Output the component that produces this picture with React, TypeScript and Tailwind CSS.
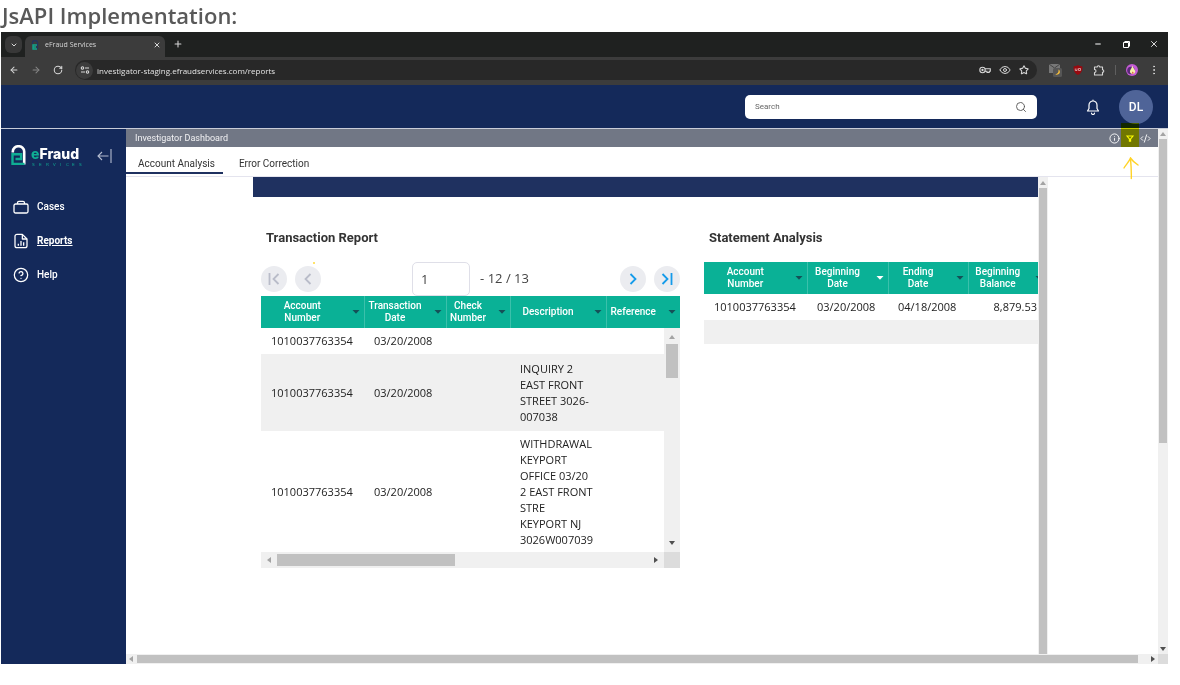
import type { ReactNode } from "react";
import clsx from "clsx";
import {
  ArrowLeft,
  ArrowRight,
  ChevronDown,
  CircleHelp,
  CodeXml,
  EllipsisVertical,
  Eye,
  Info,
  Minus,
  Plus,
  RotateCw,
  Search,
  Star,
  X,
} from "lucide-react";

interface Column {
  label: string;
  width: string;
  active?: boolean;
  align?: "right";
}

interface Row {
  height: string;
  cells: string[];
}

const transactionColumns: Column[] = [
  { label: "Account\nNumber", width: "w-[103px]" },
  { label: "Transaction\nDate", width: "w-[82px]" },
  { label: "Check\nNumber", width: "w-[64px]" },
  { label: "Description", width: "w-[96px]" },
  { label: "Reference", width: "" },
];

const transactionRows: Row[] = [
  { height: "h-[26px]", cells: ["1010037763354", "03/20/2008", "", "", ""] },
  {
    height: "h-[77px]",
    cells: ["1010037763354", "03/20/2008", "", "INQUIRY 2\nEAST FRONT\nSTREET 3026-\n007038", ""],
  },
  {
    height: "h-[121px]",
    cells: [
      "1010037763354",
      "03/20/2008",
      "",
      "WITHDRAWAL\nKEYPORT\nOFFICE 03/20\n2 EAST FRONT\nSTRE\nKEYPORT NJ\n3026W007039",
      "",
    ],
  },
];

const statementColumns: Column[] = [
  { label: "Account\nNumber", width: "w-[103px]" },
  { label: "Beginning\nDate", width: "w-[81px]", active: true },
  { label: "Ending\nDate", width: "w-[80px]" },
  { label: "Beginning\nBalance", width: "", align: "right" },
];

const statementRows: Row[] = [
  { height: "h-[26px]", cells: ["1010037763354", "03/20/2008", "04/18/2008", "8,879.53"] },
  { height: "h-6", cells: ["", "", "", ""] },
];

const arrowPoints = {
  up: "0,5 6,5 3,1",
  down: "0,1 6,1 3,5",
  left: "5,0 5,6 1,3",
  right: "1,0 1,6 5,3",
};

function Triangle({ dir, className }: { dir: keyof typeof arrowPoints; className?: string }) {
  return (
    <svg viewBox="0 0 6 6" className={clsx("size-1.5 shrink-0", className)} fill="currentColor" aria-hidden="true">
      <polygon points={arrowPoints[dir]} />
    </svg>
  );
}

function DataTable({ columns, rows, className }: { columns: Column[]; rows: Row[]; className: string }) {
  return (
    <table className={clsx("table-fixed border-collapse", className)}>
      <thead>
        <tr className="h-8 bg-[#0ab196]">
          {columns.map((col) => (
            <th key={col.label} className={clsx("border-l border-white/20 p-0 first:border-l-0", col.width)}>
              <div className="flex items-center">
                <span className="min-w-0 flex-1 text-center text-[10px] leading-3 font-medium whitespace-pre text-white">
                  {col.label}
                </span>
                <svg
                  viewBox="0 0 8 8"
                  className={clsx("mr-1 ml-2 size-2 shrink-0", col.active ? "text-white" : "text-[#155057]")}
                  fill="currentColor"
                  aria-hidden="true"
                >
                  <polygon points="0.5,2 7.5,2 4,5.8" />
                </svg>
              </div>
            </th>
          ))}
        </tr>
      </thead>
      <tbody>
        {rows.map((row, i) => (
          <tr key={i} className={clsx("even:bg-[#f0f0f0]", row.height)}>
            {row.cells.map((cell, j) => (
              <td
                key={j}
                className={clsx(
                  "px-2.5 py-0 font-['Open_Sans','Noto_Sans',sans-serif] text-[11px] leading-4 whitespace-pre text-[#222]",
                  columns[j].align === "right" && "text-right",
                )}
              >
                {cell}
              </td>
            ))}
          </tr>
        ))}
      </tbody>
    </table>
  );
}

function PagerButton({ label, disabled, children }: { label: string; disabled?: boolean; children: ReactNode }) {
  return (
    <button
      type="button"
      aria-label={label}
      disabled={disabled}
      className={clsx(
        "flex size-[26px] items-center justify-center rounded-full bg-[#ebecf0]",
        disabled ? "text-[#b9bcc9]" : "text-[#159bea]",
      )}
    >
      <svg viewBox="0 0 14 14" className="size-3.5" fill="none" stroke="currentColor" strokeWidth="1.8">
        {children}
      </svg>
    </button>
  );
}

function BrowserTabs() {
  return (
    <div className="flex h-[25px] items-end bg-[#1f2120] text-[#d6d6d6]">
      <button type="button" aria-label="Search tabs" className="mb-1 ml-1 flex size-[17px] items-center justify-center rounded-md bg-[#383838]">
        <ChevronDown className="size-2" strokeWidth={3} />
      </button>
      <div className="ml-[3px] flex h-[21px] w-[140px] items-center rounded-t-md bg-[#3c3c3c] pr-1 pb-1 pl-1.5">
        <svg viewBox="0 0 8 10" className="h-2.5 w-2" fill="none" aria-hidden="true">
          <path d="M1.5 4V3a2.5 2.5 0 0 1 5 0v6" stroke="#24335e" strokeWidth="1.4" />
          <path d="M6 5H2v4h4M2 7h3" stroke="#12a58c" strokeWidth="1.4" />
        </svg>
        <span className="ml-1.5 flex-1 font-['Open_Sans',sans-serif] text-[7px] leading-3">eFraud Services</span>
        <button type="button" aria-label="Close tab">
          <X className="size-2" strokeWidth={3} />
        </button>
      </div>
      <button type="button" aria-label="New tab" className="mb-2 ml-2">
        <Plus className="size-2.5" strokeWidth={2.5} />
      </button>
      <div className="mb-2 ml-auto flex items-center text-white">
        <button type="button" aria-label="Minimize" className="flex w-7 justify-center">
          <Minus className="size-2" strokeWidth={3} />
        </button>
        <button type="button" aria-label="Restore" className="flex w-7 justify-center">
          <svg viewBox="0 0 7 7" className="size-[7px]" fill="none" stroke="currentColor">
            <path d="M.5 1.500h5v5h-5zM1.500.5h5v5" />
          </svg>
        </button>
        <button type="button" aria-label="Close" className="flex w-7 justify-center">
          <X className="size-2.5" strokeWidth={2} />
        </button>
      </div>
    </div>
  );
}

function AddressBar() {
  return (
    <div className="flex h-7 items-center bg-[#3c3c3c] pr-2 pb-0.5 pl-2 text-[#d6d6d6]">
      <button type="button" aria-label="Back" className="w-[22px]">
        <ArrowLeft className="size-2.5" strokeWidth={2.5} />
      </button>
      <button type="button" aria-label="Forward" className="w-[22px] text-[#868686]">
        <ArrowRight className="size-2.5" strokeWidth={2.5} />
      </button>
      <button type="button" aria-label="Reload" className="w-[22px]">
        <RotateCw className="size-2.5" strokeWidth={2.5} />
      </button>
      <div className="flex h-5 min-w-0 flex-1 items-center rounded-full bg-[#282828] pr-2 pl-px">
        <span className="flex size-[17px] shrink-0 items-center justify-center rounded-full bg-[#3c3c3c]">
          <svg viewBox="0 0 10 10" className="size-2.5" fill="none" stroke="currentColor" strokeWidth="1.1" aria-hidden="true">
            <circle cx="2.5" cy="3" r="1.2" />
            <circle cx="7.5" cy="7" r="1.2" />
            <path d="M5 3h4M1 7h4" />
          </svg>
        </span>
        <input
          aria-label="Address"
          readOnly
          value="investigator-staging.efraudservices.com/reports"
          className="ml-1 h-4 min-w-0 flex-1 bg-transparent font-['Open_Sans',sans-serif] text-[8px] text-[#e3e3e3] outline-none"
        />
        <div className="flex items-center gap-2">
          <svg viewBox="0 0 12 8" className="h-2 w-3" fill="none" stroke="currentColor" strokeWidth="1.1" aria-hidden="true">
            <circle cx="3.5" cy="4" r="2.7" />
            <circle cx="3.5" cy="4" r="0.6" fill="currentColor" />
            <path d="M6 2.7h5.3v2.6h-1.1v1.2H8V5.3H6" />
          </svg>
          <Eye className="size-3" strokeWidth={2} />
          <Star className="size-2.5" strokeWidth={2.5} />
        </div>
      </div>
      <div className="ml-3 flex items-center gap-2.5">
        <svg viewBox="0 0 14 14" className="size-3.5" aria-hidden="true">
          <path d="M0 1h11v9H0z" fill="#777" />
          <path d="M0 1l5.5 4L11 1" stroke="#444" fill="none" />
          <rect x="4" y="5" width="9" height="9" rx="1.500" fill="#565656" />
          <path d="M9.5 6.5C12 8 11.500 12.500 6 11.500C9 11 9.800 9 9.500 6.500z" fill="#f5bd3c" />
        </svg>
        <svg viewBox="0 0 10 10" className="size-2.5" aria-hidden="true">
          <path d="M5 0C6.500 1 8 1.400 9.500 1.400 9.800 5.500 8 8.500 5 10 2 8.500.2 5.500.5 1.400 2 1.400 3.500 1 5 0z" fill="#98090f" />
          <path d="M2.300 3.500v2h1.700v-2M5.500 3.500h2v2h-2z" stroke="#e8c8c8" strokeWidth="0.7" fill="none" />
        </svg>
        <svg viewBox="0 0 12 12" className="size-3" fill="none" stroke="currentColor" strokeWidth="1.100" strokeLinejoin="round" aria-hidden="true">
          <path d="M1.500 3h2.700a1.300 1.300 0 0 1 2.600 0H9.500v2.700a1.300 1.300 0 0 1 0 2.600V11h-8V8.500a1.500 1.500 0 0 0 0-3z" />
        </svg>
        <span className="h-2.5 w-px bg-[#5f5f5f]" />
        <svg viewBox="0 0 12 12" className="size-3" aria-hidden="true">
          <circle cx="6" cy="6" r="6" fill="#c45bd6" />
          <circle cx="5" cy="6.500" r="3.800" fill="#5a2a78" />
          <path d="M6.200 1.500C7 4 9.300 5.500 9.300 8A2.800 2.800 0 0 1 3.900 8C3.900 5.500 6 4.500 6.200 1.500z" fill="#f6f0a8" />
          <path d="M6.800 7.500c1 .8.800 2 0 2.200-1-.2-1-1.400 0-2.200z" fill="#e0483a" />
        </svg>
        <EllipsisVertical className="size-3" strokeWidth={2} />
      </div>
    </div>
  );
}

function AppHeader() {
  return (
    <header className="flex h-11 items-center justify-end border-b border-[#c8ccd8] bg-[#14295a] pr-[15px]">
      <label className="flex h-6 w-[292px] items-center rounded-[5px] bg-white px-2.5">
        <input
          type="search"
          placeholder="Search"
          aria-label="Search"
          className="min-w-0 flex-1 text-[8px] outline-none placeholder:text-[#666]"
        />
        <Search className="size-3 text-[#555]" strokeWidth={1.8} />
      </label>
      <button type="button" aria-label="Notifications" className="ml-12 text-white">
        <svg viewBox="0 0 16 16" className="size-4" fill="none" stroke="currentColor" strokeWidth="1.200" strokeLinejoin="round" strokeLinecap="round">
          <path d="M2.500 12h11L12 9.500V6a4 4 0 0 0-8 0v3.500zM8 2V1M6.500 14a1.500 1.500 0 0 0 3 0" />
        </svg>
      </button>
      <button type="button" className="ml-[18px] flex size-[34px] items-center justify-center rounded-full bg-[#4f6498] text-xs font-medium text-white">
        DL
      </button>
    </header>
  );
}

function CaseIcon() {
  return (
    <svg viewBox="0 0 16 14" className="h-3.5 w-4" fill="none" stroke="currentColor" strokeWidth="1.300">
      <rect x="1" y="4" width="14" height="9" rx="1.500" />
      <path d="M4.500 4V2.800a1.500 1.500 0 0 1 1.500-1.500h4a1.500 1.500 0 0 1 1.500 1.500V4" />
    </svg>
  );
}

function ReportIcon() {
  return (
    <svg viewBox="0 0 24 24" className="size-4" fill="none" stroke="currentColor" strokeWidth="1.900" strokeLinejoin="round">
      <path d="M14 2H6a3 3 0 0 0-3 3v14a3 3 0 0 0 3 3h12a3 3 0 0 0 3-3V9z" />
      <path d="M14 2v7h7M8 19v-3M12 19v-7M16 19v-5" />
    </svg>
  );
}

const navItems = [
  { label: "Cases", icon: <CaseIcon /> },
  { label: "Reports", icon: <ReportIcon />, active: true },
  { label: "Help", icon: <CircleHelp className="size-4" strokeWidth={1.9} /> },
];

function Logo() {
  return (
    <svg viewBox="0 0 74 22" className="h-[22px] w-[74px]" role="img" aria-label="eFraud Services">
      <path d="M1.800 7.500V6.500a5.600 5.200 0 0 1 11.400 0V19.500" fill="none" stroke="#fff" strokeWidth="2.600" />
      <path d="M4.500 14h5.600V9.200H1.500v9.700h12" fill="none" stroke="#0fae94" strokeWidth="2.400" />
      <text x="20" y="14" fontSize="14" fontWeight="800" fontFamily="Inter, sans-serif" fill="#fff">
        <tspan fill="#0fae94">e</tspan>Fraud
      </text>
      <text x="21 28 35 42 49 55 61 68" y="21" fontSize="4" fontFamily="'Liberation Sans', sans-serif" fill="#0fae94">
        SERVICES
      </text>
    </svg>
  );
}

function Sidebar() {
  return (
    <aside className="w-[125px] shrink-0 bg-[#14295a] text-white">
      <div className="flex items-center pt-4 pr-3.5 pl-2.5">
        <Logo />
        <button type="button" aria-label="Collapse menu" className="ml-auto">
          <svg viewBox="0 0 15 14" className="h-3.5 w-[15px]" fill="none" stroke="#b4bcd0" strokeWidth="1.100">
            <path d="M11.500 7H1M5 3L1 7l4 4M14 0v14" />
          </svg>
        </button>
      </div>
      <nav className="mt-[23px] flex flex-col pl-3">
        {navItems.map((item) => (
          <a key={item.label} href={`#${item.label.toLowerCase()}`} className="flex h-[34px] items-center gap-2 text-[10px] leading-4">
            {item.icon}
            <span className={item.active ? "font-bold underline" : "font-medium"}>{item.label}</span>
          </a>
        ))}
      </nav>
    </aside>
  );
}

function TitleBar() {
  return (
    <div className="flex h-[18px] items-center bg-[#717785] pr-[7px] pl-[9px] text-white">
      <h2 className="flex-1 text-[9px] leading-3 text-[#f1f1f3]">Investigator Dashboard</h2>
      <div className="flex items-center gap-[5px]">
        <button type="button" aria-label="Information">
          <Info className="size-[11px]" strokeWidth={2} />
        </button>
        <button type="button" aria-label="Filter" className="relative">
          <svg viewBox="0 0 10 10" className="size-2.5" fill="none" stroke="currentColor" strokeWidth="1.100">
            <path d="M2 3h6L5.600 6v2.300H4.400V6z" />
          </svg>
          {/* Marker strokes pointing at the filter control */}
          <span className="absolute -top-2.5 -left-1 h-6 w-[18px] bg-[#ffff00] mix-blend-multiply" />
          <svg viewBox="0 0 18 24" className="absolute top-6 -left-1 h-6 w-[18px]" fill="none" stroke="#ffd326" strokeWidth="1.400" strokeLinecap="round">
            <path d="M10.300 21.500C10.500 14 10 7 9.500 1.500M3 11C5 7.500 8 5 9.500 1c2 3 4.500 5 7.500 7" />
          </svg>
        </button>
        <button type="button" aria-label="Embed code">
          <CodeXml className="size-[11px]" strokeWidth={2} />
        </button>
      </div>
    </div>
  );
}

function ReportTabs() {
  return (
    <div role="tablist" className="flex h-[30px] items-end gap-1 border-b border-[#e4e4ee] text-[10px] text-[#333]">
      <button type="button" role="tab" aria-selected="true" className="mb-0.5 border-b-2 border-[#1f3160] pt-1 pr-2 pl-3 leading-4">
        Account Analysis
      </button>
      <button type="button" role="tab" aria-selected="false" className="mb-0.5 border-b-2 border-transparent pt-1 pr-2 pl-3 leading-4">
        Error Correction
      </button>
    </div>
  );
}

function TransactionReport() {
  return (
    <section>
      <h3 className="pl-[5px] text-[13px] leading-4 font-bold text-[#333]">Transaction Report</h3>
      <div className="mt-4 flex h-[34px] items-center gap-2">
        <PagerButton label="First page" disabled>
          <path d="M2.500 1v12M11.500 2l-5 5 5 5" />
        </PagerButton>
        <div className="relative flex">
          <PagerButton label="Previous page" disabled>
            <path d="M9.500 2l-5 5 5 5" />
          </PagerButton>
          <span className="absolute -top-1 left-[18px] size-0.5 bg-[#ffe36b]" />
        </div>
        <div className="flex flex-1 items-center justify-center gap-2.5 font-['Open_Sans','Noto_Sans',sans-serif] text-[13px] text-[#444]">
          <input
            aria-label="Page"
            defaultValue="1"
            className="h-[34px] w-[58px] rounded-[5px] border border-[#dfdfe8] px-2 outline-none"
          />
          <span>- 12 / 13</span>
        </div>
        <PagerButton label="Next page">
          <path d="M4.500 2l5 5-5 5" />
        </PagerButton>
        <PagerButton label="Last page">
          <path d="M11.500 1v12M2.500 2l5 5-5 5" />
        </PagerButton>
      </div>
      <div className="relative">
        <DataTable columns={transactionColumns} rows={transactionRows} className="w-full" />
        <div className="absolute top-8 right-0 bottom-0 flex w-4 flex-col items-center bg-[#f0f0f0] py-1.5">
          <Triangle dir="up" className="text-[#a3a3a3]" />
          <div className="mt-1 h-[34px] w-3 bg-[#c1c1c1]" />
          <Triangle dir="down" className="mt-auto text-[#505050]" />
        </div>
      </div>
      <div className="flex h-4 bg-[#f0f0f0]">
        <div className="flex flex-1 items-center px-[5px]">
          <Triangle dir="left" className="text-[#a3a3a3]" />
          <div className="ml-[5px] h-3 w-[178px] bg-[#c1c1c1]" />
          <Triangle dir="right" className="ml-auto text-[#505050]" />
        </div>
        <div className="w-4 bg-[#dcdcdc]" />
      </div>
    </section>
  );
}

function StatementAnalysis() {
  return (
    <section className="min-w-0 overflow-hidden">
      <h3 className="pl-[5px] text-[13px] leading-4 font-bold text-[#333]">Statement Analysis</h3>
      <div className="mt-4">
        <DataTable columns={statementColumns} rows={statementRows} className="w-[calc(100%+9px)]" />
      </div>
    </section>
  );
}

function ReportCanvas() {
  return (
    <div className="flex flex-1 pr-[110px] pl-[127px]">
      <div className="min-w-0 flex-1">
        <div className="h-5 bg-[#1f3160]" />
        <div className="grid grid-cols-[419fr_334fr] gap-6 pt-[33px] pl-2">
          <TransactionReport />
          <StatementAnalysis />
        </div>
      </div>
      <div className="flex w-2.5 flex-col items-center bg-[#f0f0f0] pt-[3px]">
        <Triangle dir="up" className="text-[#a3a3a3]" />
        <div className="mt-0.5 w-2 flex-1 bg-[#c1c1c1]" />
      </div>
    </div>
  );
}

export default function App() {
  return (
    <div className="flex min-h-screen flex-col bg-white pr-3 pb-[21px] pl-px font-['Roboto',sans-serif]">
      <h1 className="h-8 pl-px font-['Open_Sans','Noto_Sans',sans-serif] text-[22px] leading-[30px] font-semibold text-[#595959]">
        JsAPI Implementation:
      </h1>
      <div className="flex flex-1 flex-col">
        <BrowserTabs />
        <AddressBar />
        <AppHeader />
        <div className="flex flex-1">
          <Sidebar />
          <main className="flex min-w-0 flex-1 flex-col">
            <div className="flex flex-1">
              <div className="flex min-w-0 flex-1 flex-col">
                <TitleBar />
                <ReportTabs />
                <ReportCanvas />
              </div>
              <div className="flex w-2.5 flex-col items-center bg-[#f0f0f0] py-0.5">
                <Triangle dir="up" className="text-[#a3a3a3]" />
                <div className="mt-0.5 w-2 flex-[3] bg-[#c1c1c1]" />
                <div className="flex-[2]" />
                <Triangle dir="down" className="text-[#505050]" />
              </div>
            </div>
            <div className="flex h-2.5 bg-[#f0f0f0]">
              <div className="flex flex-1 items-center px-0.5">
                <Triangle dir="left" className="text-[#a3a3a3]" />
                <div className="mr-3 ml-[3px] h-2 flex-1 bg-[#c1c1c1]" />
                <Triangle dir="right" className="text-[#505050]" />
              </div>
              <div className="w-2.5 bg-[#dcdcdc]" />
            </div>
          </main>
        </div>
      </div>
    </div>
  );
}
